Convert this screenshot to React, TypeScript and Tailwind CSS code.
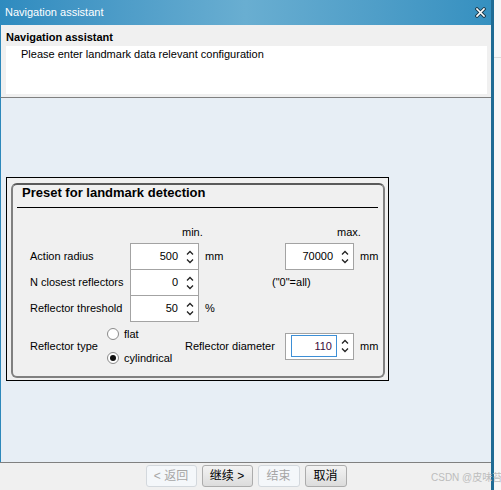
import React from 'react';

// Small up/down spin arrows used by the numeric fields
const SpinArrows: React.FC = () => (
    <svg width="8" height="16" viewBox="0 0 8 16" className="block">
        <path d="M1 5.5 L4 2.5 L7 5.5" fill="none" stroke="#222" strokeWidth="1.3" />
        <path d="M1 10.5 L4 13.5 L7 10.5" fill="none" stroke="#222" strokeWidth="1.3" />
    </svg>
);

const Spinner: React.FC<{ value: string }> = ({ value }) => (
    <div className="w-[69px] h-[27px] shrink-0 border border-[#a3a3a3] bg-white flex items-center">
        <span className="flex-1 text-right pr-[5px] leading-[13px]">{value}</span>
        <span className="w-[14px] mr-[1px] flex justify-center">
            <SpinArrows />
        </span>
    </div>
);

const FocusSpinner: React.FC<{ value: string }> = ({ value }) => (
    <div className="w-[69px] h-[27px] shrink-0 border border-[#a3a3a3] bg-white flex items-center pl-[5px]">
        <div className="w-[46px] h-[22px] border border-[#3d8fd6] bg-white flex items-center justify-end pr-[4px] text-[#3a0a3a]">
            {value}
        </div>
        <span className="w-[14px] ml-[1px] flex justify-center">
            <SpinArrows />
        </span>
    </div>
);

const Radio: React.FC<{ label: string; checked?: boolean }> = ({ label, checked }) => (
    <div className="h-[24px] flex items-center">
        <span className="w-[12px] h-[12px] rounded-full border border-[#8a8a8a] bg-white flex items-center justify-center">
            {checked && <span className="w-[6px] h-[6px] rounded-full bg-[#111]" />}
        </span>
        <span className="ml-[5px]">{label}</span>
    </div>
);

const Button: React.FC<{ label: string; width: string; disabled?: boolean }> = ({ label, width, disabled }) => (
    <div
        className={
            disabled
                ? `${width} h-[22px] rounded-[3px] border border-[#d3d8dd] bg-[#f4f7fa] text-[#a6a6a6] flex items-center justify-center text-[12px]`
                : `${width} h-[22px] rounded-[3px] border border-[#acacac] bg-gradient-to-b from-[#f3f3f3] to-[#dcdcdc] text-black flex items-center justify-center text-[12px]`
        }
    >
        {label}
    </div>
);

export default function App() {
    return (
        <div className="relative w-[501px] h-[490px] flex bg-[#f7f7f7] text-[11px] text-black font-['Liberation_Sans','Noto_Sans_CJK_SC',sans-serif] overflow-hidden">
            {/* Dialog window */}
            <div className="w-[494px] h-full flex flex-col border-r-[3px] border-r-[#1f6b94]">
                {/* Title bar */}
                <div className="h-[25px] shrink-0 flex items-center justify-between pl-[5px] pr-[5px] bg-gradient-to-r from-[#2e8bbf] via-[#69aed1] to-[#3590c0] text-white text-[11px]">
                    <span>Navigation assistant</span>
                    <svg width="11" height="11" viewBox="0 0 11 11">
                        <path d="M2 2 L9 9 M9 2 L2 9" stroke="#1b3a4a" strokeWidth="3.4" strokeLinecap="square" />
                        <path d="M2 2 L9 9 M9 2 L2 9" stroke="#fff" strokeWidth="1.6" strokeLinecap="square" />
                    </svg>
                </div>

                {/* Header */}
                <div className="h-[73px] shrink-0 border-l border-l-[#2d88bb] border-b border-b-[#808080] bg-[#f0f0f0] pl-[5px] pr-[4px] pt-[6px]">
                    <div className="font-bold leading-[13px]">Navigation assistant</div>
                    <div className="mt-[2px] h-[48px] bg-white pl-[15px] pt-[2px] leading-[13px]">
                        Please enter landmark data relevant configuration
                    </div>
                </div>

                {/* Content */}
                <div className="flex-1 border-l border-l-[#2d88bb] bg-[#e7eef5] pt-[79px] pl-[5px]">
                    <div className="w-[383px] h-[204px] border border-black bg-[#f0f0f0] pt-[5px] pl-[4px] pr-[3px] pb-[2px]">
                        <div className="h-full rounded-[6px] border-2 border-[#808080] border-t-[#5a5a5a] flex flex-col">
                            <div className="h-[22px] leading-[15px] pl-[9px] text-[13px] font-bold">
                                Preset for landmark detection
                            </div>
                            <div className="h-px ml-[4px] mr-[5px] bg-black" />

                            {/* min / max captions */}
                            <div className="h-[35px] pt-[18px] pl-[169px] flex leading-[13px]">
                                <span className="w-[155px]">min.</span>
                                <span>max.</span>
                            </div>

                            <div className="h-[26px] pl-[17px] flex items-start">
                                <span className="w-[100px] h-[26px] flex items-center">Action radius</span>
                                <Spinner value="500" />
                                <span className="ml-[6px] w-[80px] h-[26px] flex items-center">mm</span>
                                <Spinner value="70000" />
                                <span className="ml-[6px] h-[26px] flex items-center">mm</span>
                            </div>
                            <div className="h-[26px] pl-[17px] flex items-start">
                                <span className="w-[100px] h-[26px] flex items-center">N closest reflectors</span>
                                <Spinner value="0" />
                                <span className="ml-[73px] h-[26px] flex items-center">("0"=all)</span>
                            </div>
                            <div className="h-[26px] pl-[17px] flex items-start">
                                <span className="w-[100px] h-[26px] flex items-center">Reflector threshold</span>
                                <Spinner value="50" />
                                <span className="ml-[6px] h-[26px] flex items-center">%</span>
                            </div>

                            <div className="h-[50px] pl-[17px] flex items-center">
                                <span className="w-[77px]">Reflector type</span>
                                <div className="w-[78px] flex flex-col">
                                    <Radio label="flat" />
                                    <Radio label="cylindrical" checked />
                                </div>
                                <span className="w-[100px]">Reflector diameter</span>
                                <FocusSpinner value="110" />
                                <span className="ml-[6px]">mm</span>
                            </div>
                        </div>
                    </div>
                </div>

                {/* Button bar */}
                <div className="h-[28px] shrink-0 border-t border-t-[#808080] bg-[#f0f0f0] pt-[2px] flex justify-center gap-[5px] pl-[1px]">
                    <Button label="< 返回" width="w-[51px]" disabled />
                    <Button label="继续 >" width="w-[51px]" />
                    <Button label="结束" width="w-[42px]" disabled />
                    <Button label="取消" width="w-[42px]" />
                </div>
            </div>

            {/* Page behind the dialog */}
            <div className="flex-1 pt-[57px]">
                <div className="h-px bg-[#dcdcdc]" />
            </div>

            {/* Watermark */}
            <div className="absolute left-[431px] top-[470px] text-[10px] text-[#bdbdbd] whitespace-nowrap">
                CSDN @皮味苔
            </div>
        </div>
    );
}
